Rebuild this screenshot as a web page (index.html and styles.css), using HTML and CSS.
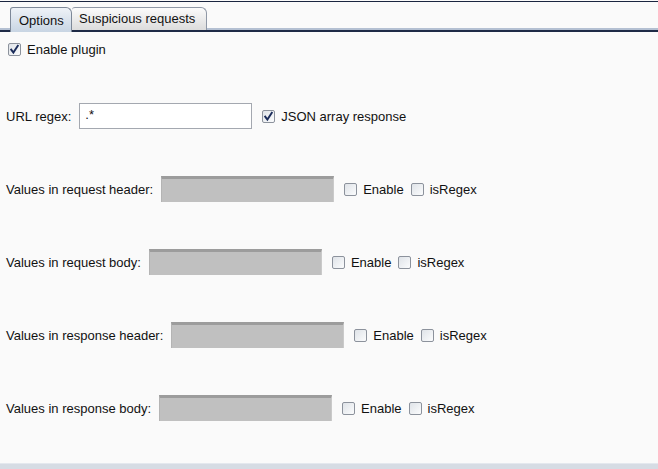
FILE: index.html
```html
<!DOCTYPE html>
<html>
<head>
<meta charset="utf-8">
<link rel="stylesheet" href="styles.css">
</head>
<body>
<div class="window">
  <div class="tabbar">
    <div class="tab selected">Options</div>
    <div class="tab">Suspicious requests</div>
  </div>
  <div class="content">
    <div class="row row-plugin">
      <span class="cb checked"><svg width="11" height="11" viewBox="0 0 11 11"><path d="M2.2 5.6 L4.4 8.6 L8.8 1.8" fill="none" stroke="#1b2c5a" stroke-width="1.9" stroke-linecap="square"/></svg></span>
      <span class="cb-label">Enable plugin</span>
    </div>
    <div class="row row-url">
      <span class="label">URL regex:</span>
      <span class="input">.*</span>
      <span class="cb checked"><svg width="11" height="11" viewBox="0 0 11 11"><path d="M2.2 5.6 L4.4 8.6 L8.8 1.8" fill="none" stroke="#1b2c5a" stroke-width="1.9" stroke-linecap="square"/></svg></span>
      <span class="cb-label">JSON array response</span>
    </div>
    <div class="row row-field">
      <span class="label">Values in request header:</span>
      <span class="field"></span>
      <span class="cb"></span><span class="cb-label">Enable</span>
      <span class="cb"></span><span class="cb-label">isRegex</span>
    </div>
    <div class="row row-field">
      <span class="label">Values in request body:</span>
      <span class="field"></span>
      <span class="cb"></span><span class="cb-label">Enable</span>
      <span class="cb"></span><span class="cb-label">isRegex</span>
    </div>
    <div class="row row-field">
      <span class="label">Values in response header:</span>
      <span class="field"></span>
      <span class="cb"></span><span class="cb-label">Enable</span>
      <span class="cb"></span><span class="cb-label">isRegex</span>
    </div>
    <div class="row row-field">
      <span class="label">Values in response body:</span>
      <span class="field"></span>
      <span class="cb"></span><span class="cb-label">Enable</span>
      <span class="cb"></span><span class="cb-label">isRegex</span>
    </div>
  </div>
  <div class="bottom"></div>
</div>
</body>
</html>
```
FILE: styles.css
```css
html, body {
  margin: 0;
  padding: 0;
  background: #fafafa;
}
body {
  font-family: "Liberation Sans", Arial, sans-serif;
  font-size: 13px;
  color: #111;
  width: 658px;
  height: 469px;
  overflow: hidden;
}
.window {
  display: flex;
  flex-direction: column;
  height: 469px;
}
.tabbar {
  margin-top: 1px;
  border-top: 1px solid #1a2540;
  height: 24px;
  padding: 4px 0 0 10px;
  display: flex;
  align-items: flex-end;
  border-bottom: 2px solid #1e2a46;
  box-shadow: inset 0 -2px 0 #b4c0d2;
  background: #fafafa;
}
.tab {
  height: 23px;
  box-sizing: border-box;
  padding: 3px 0 0 7px;
  border: 1px solid #8f98a6;
  border-bottom: none;
  border-radius: 3px 6px 0 0;
  background: linear-gradient(#fbfbfb, #dcdcdc);
  line-height: 16px;
  font-size: 13px;
  color: #111;
}
.tab.selected {
  background: linear-gradient(#eef2f7, #c8d5e3);
  border-color: #7d8898;
  height: 25px;
  padding-top: 5px;
  margin-bottom: -2px;
  width: 62px;
  padding-left: 8px;
}
.tab + .tab {
  border-left: none;
  width: 135px;
}
.content {
  flex: 1;
  padding-left: 6px;
}
.row {
  display: flex;
  align-items: center;
  white-space: nowrap;
}
.row-plugin {
  height: 16px;
  margin-top: 9px;
  margin-left: 2px;
}
.row-url {
  height: 26px;
  margin-top: 46px;
}
.row-field {
  height: 26px;
  margin-top: 47px;
}
.label {
  margin-right: 8px;
}
.input {
  width: 173px;
  height: 26px;
  box-sizing: border-box;
  background: #fff;
  border: 1px solid #a4a8b0;
  padding-left: 5px;
  line-height: 22px;
  margin-right: 10px;
}
.field {
  width: 173px;
  height: 26px;
  box-sizing: border-box;
  background: #c0c0c0;
  border-top: 3px solid #9c9c9c;
  border-left: 1px solid #b4b4b4;
  border-right: 1px solid #cacaca;
  margin-right: 10px;
}
.cb {
  width: 13px;
  height: 13px;
  box-sizing: border-box;
  border: 1px solid #8c929c;
  border-radius: 2px;
  background: linear-gradient(135deg, #dfe3e8, #fbfcfd);
  display: inline-flex;
  align-items: center;
  justify-content: center;
  flex: none;
}
.cb svg {
  display: block;
}
.cb-label {
  margin-left: 6px;
  margin-right: 7px;
}
.bottom {
  height: 5px;
  border-top: 1px solid #e4e8ee;
  background: #d6dce4;
}
```
